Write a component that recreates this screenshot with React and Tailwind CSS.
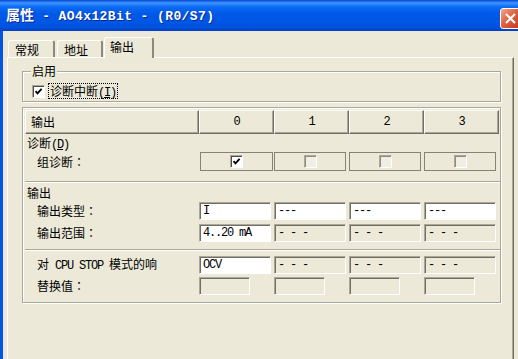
import { useState } from 'react'

const MONO = "font-['Liberation_Mono',monospace] text-[12px] tracking-[-1.2px]"

function CheckMark() {
  return (
    <svg width="9" height="9" viewBox="0 0 9 9" className="block">
      <path d="M1.5 4.2 L3.5 6.4 L7.6 1.8" fill="none" stroke="#000" strokeWidth="1.8" />
    </svg>
  )
}

function Checkbox({ checked, disabled }) {
  return (
    <span
      className={`w-[13px] h-[13px] shrink-0 flex items-center justify-center border border-[#aca899] border-b-white border-r-white ${
        disabled ? 'bg-[#f1efe4] shadow-[inset_1px_1px_0_#8f8c7f]' : 'bg-white shadow-[inset_1px_1px_0_#4f4d45]'
      }`}
    >
      {checked && <CheckMark />}
    </span>
  )
}

function Field({ value, white, narrow }) {
  return (
    <div
      className={`h-[18px] ${narrow ? 'w-[51px]' : 'w-[72px]'} border border-[#aca899] border-b-white border-r-white shadow-[inset_1px_1px_0_#716f64] pl-[3px] leading-[16px] whitespace-pre ${MONO} ${
        white ? 'bg-white' : 'bg-[#ece9d8]'
      }`}
    >
      {value}
    </div>
  )
}

function HeadCell({ children, wide }) {
  return (
    <div
      className={`h-[24px] ${wide ? 'w-[174px] justify-start pl-[5px]' : 'w-[75px] justify-center'} flex items-center border border-white border-r-[#716f64] border-b-[#716f64] shadow-[inset_-1px_-1px_0_#aca899]`}
    >
      {children}
    </div>
  )
}

function Colon() {
  return <span className="font-['Noto_Sans_CJK_TC',sans-serif]">：</span>
}

function Row({ label, children, className = '' }) {
  return (
    <div className={`flex items-center ${className}`}>
      <div className="w-[174px] pl-[12px] leading-[14px]">{label}</div>
      {children.map((c, i) => (
        <div key={i} className="w-[75px]">
          {c}
        </div>
      ))}
    </div>
  )
}

function Tab({ children, active, className = '' }) {
  if (active) {
    return (
      <div
        className={`relative z-10 h-[21px] -mb-px w-[50px] bg-[#ece9d8] border-t border-l border-white border-r-2 border-r-[#8d8a7d] rounded-t-[3px] pl-[5px] pt-[1px] leading-[16px] ${className}`}
      >
        {children}
      </div>
    )
  }
  return (
    <div
      className={`h-[17px] border-t border-l border-white border-r-2 border-r-[#8d8a7d] rounded-t-[3px] pl-[6px] pt-[2px] leading-[14px] ${className}`}
    >
      {children}
    </div>
  )
}

export default function App() {
  const [diag, setDiag] = useState(true)

  return (
    <div className="w-[518px] h-[359px] overflow-hidden bg-[#ece9d8] text-[12px] text-black font-['Noto_Sans_CJK_SC','Liberation_Sans',sans-serif]">
      <div className="w-[526px] h-full flex flex-col">
        {/* title bar */}
        <div className="h-[31px] shrink-0 flex bg-[linear-gradient(to_bottom,#0a46d6_0px,#3d95ff_3px,#0a6af2_7px,#0058e6_14px,#0055e5_24px,#0450db_28px,#003dbf_31px)] pl-[6px] pr-[5px]">
          <div className="self-center flex items-baseline text-white [text-shadow:1px_1px_0_#0c2c8c] font-bold">
            <span className="text-[14px]">属性</span>
            <span className="font-['Liberation_Mono',monospace] text-[13px] tracking-[0.4px] whitespace-pre"> - AO4x12Bit - (R0/S7)</span>
          </div>
          <div className="ml-auto mt-[8px] w-[21px] h-[21px] rounded-[3px] border border-white bg-[linear-gradient(135deg,#f4a58c,#e0623f_45%,#c4351c)] flex items-center justify-center">
            <svg width="13" height="13" viewBox="0 0 13 13">
              <path d="M2 2 L11 11 M11 2 L2 11" stroke="#fff" strokeWidth="2.2" />
            </svg>
          </div>
        </div>

        {/* body */}
        <div className="flex-1 flex flex-col border-l-[3px] border-l-[#0555e5] pl-[4px] pt-[6px]">
          <div className="h-[20px] flex items-end pl-[1px]">
            <Tab className="w-[47px]">常规</Tab>
            <Tab className="w-[46px] ml-[2px]">地址</Tab>
            <Tab active className="ml-[1px]">输出</Tab>
          </div>

          <div className="flex-1 w-[507px] border-t border-l border-white border-r border-r-[#716f64] shadow-[inset_-1px_0_0_#aca899] pl-[14px]">
            {/* group 启用 */}
            <div className="relative mt-[13px] w-[479px] h-[31px] border border-[#aca899] shadow-[inset_1px_1px_0_#fff,1px_1px_0_#fff] pl-[9px] pt-[11px]">
              <span className="absolute -top-[8px] left-[8px] px-[1px] bg-[#ece9d8] leading-[14px]">启用</span>
              <div className="flex items-center gap-[3px]" onClick={() => setDiag(!diag)}>
                <Checkbox checked={diag} />
                <span className="h-[16px] border border-dotted border-black px-[1px] leading-[14px]">
                  诊断中断<span className={MONO}>(<span className="underline">I</span>)</span>
                </span>
              </div>
            </div>

            {/* parameter frame */}
            <div className="mt-[5px] w-[479px] border border-[#aca899] shadow-[inset_1px_1px_0_#fff,1px_1px_0_#fff] pl-[2px]">
              <div className="pt-[2px] pb-[10px]">
                <div className="flex">
                  <HeadCell wide>输出</HeadCell>
                  <HeadCell><span className={MONO}>0</span></HeadCell>
                  <HeadCell><span className={MONO}>1</span></HeadCell>
                  <HeadCell><span className={MONO}>2</span></HeadCell>
                  <HeadCell><span className={MONO}>3</span></HeadCell>
                </div>
                <div className="mt-[2px] h-[14px] pl-[2px] leading-[14px]">
                  诊断<span className={MONO}>(<span className="underline">D</span>)</span>
                </div>
                <Row label={<>组诊断<Colon /></>} className="mt-[2px]">
                  {[0, 1, 2, 3].map((i) => (
                    <div
                      key={i}
                      className={`${i === 0 ? 'ml-[1px] w-[73px]' : 'w-[72px]'} h-[19px] border border-[#858375] flex items-center justify-center`}
                    >
                      <Checkbox checked={i === 0} disabled={i !== 0} />
                    </div>
                  ))}
                </Row>
              </div>

              <div className="border-t border-[#aca899] shadow-[inset_0_1px_0_#fff] pt-[4px] pb-[7px]">
                <div className="h-[14px] pl-[2px] leading-[14px]">输出</div>
                <Row label={<>输出类型<Colon /></>} className="mt-[2px]">
                  {[
                    <Field key="a" white value="I" />,
                    <Field key="b" white value="---" />,
                    <Field key="c" white value="---" />,
                    <Field key="d" white value="---" />,
                  ]}
                </Row>
                <Row label={<>输出范围<Colon /></>} className="mt-[4px]">
                  {[
                    <Field key="a" white value="4..20 mA" />,
                    <Field key="b" value="- - -" />,
                    <Field key="c" value="- - -" />,
                    <Field key="d" value="- - -" />,
                  ]}
                </Row>
              </div>

              <div className="border-t border-[#aca899] shadow-[inset_0_1px_0_#fff] pt-[6px] pb-[7px]">
                <Row
                  label={
                    <span className="whitespace-pre">
                      对<span className={MONO}> CPU STOP </span>模式的响
                    </span>
                  }
                >
                  {[
                    <Field key="a" white value="OCV" />,
                    <Field key="b" value="- - -" />,
                    <Field key="c" value="- - -" />,
                    <Field key="d" value="- - -" />,
                  ]}
                </Row>
                <Row label={<>替换值<Colon /></>} className="mt-[3px]">
                  {[
                    <Field key="a" narrow value="" />,
                    <Field key="b" narrow value="" />,
                    <Field key="c" narrow value="" />,
                    <Field key="d" narrow value="" />,
                  ]}
                </Row>
              </div>
            </div>
          </div>
        </div>
      </div>
    </div>
  )
}
